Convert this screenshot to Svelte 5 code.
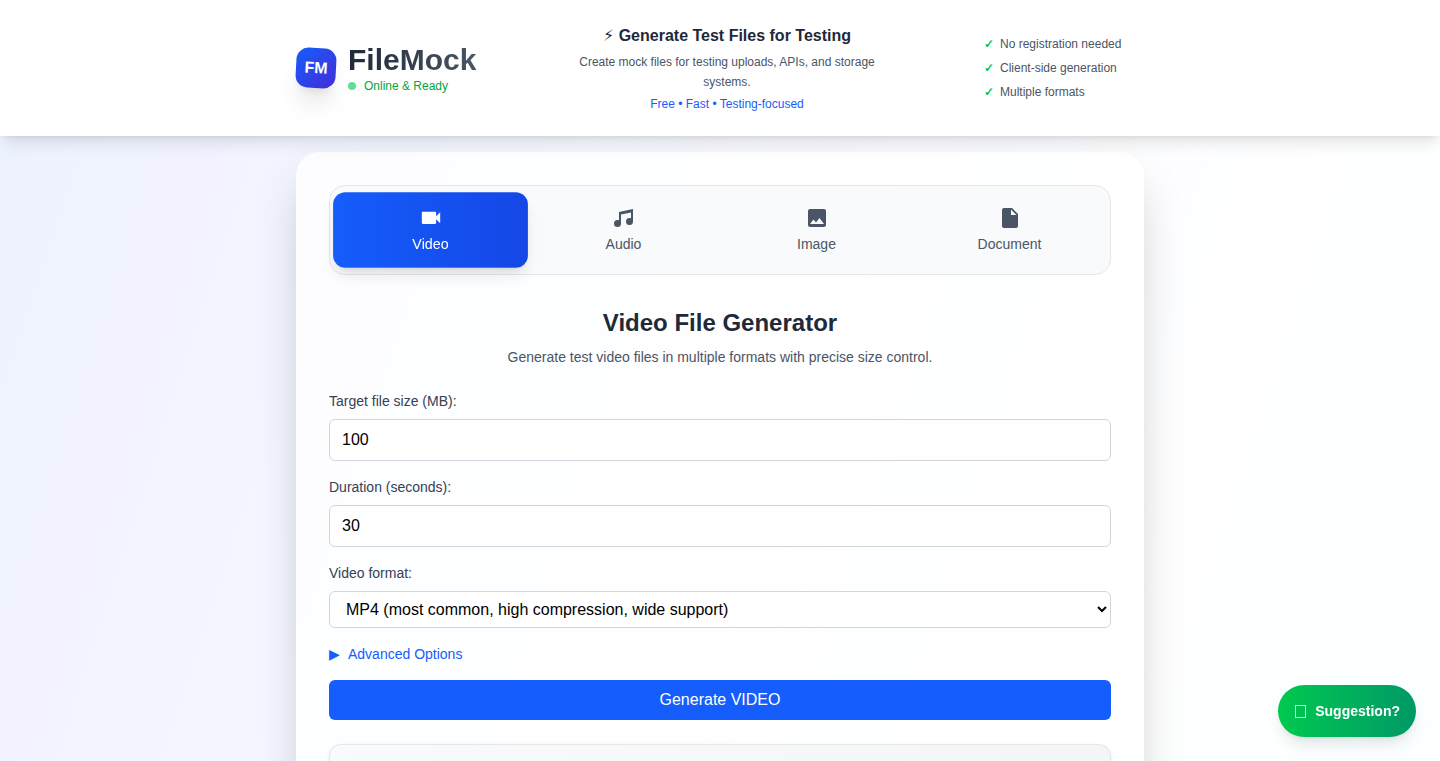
<script>
  const tabs = [
    { id: 'video', label: 'Video', path: 'M17 10.5V7c0-.55-.45-1-1-1H4c-.55 0-1 .45-1 1v10c0 .55.45 1 1 1h12c.55 0 1-.45 1-1v-3.5l4 4v-11l-4 4z' },
    { id: 'audio', label: 'Audio', path: 'M21 3v12.5a3.5 3.5 0 0 1-3.5 3.5a3.5 3.5 0 0 1-3.5-3.5a3.5 3.5 0 0 1 3.5-3.5c.54 0 1.05.12 1.5.34V6.47L9 8.6v8.9A3.5 3.5 0 0 1 5.5 21A3.5 3.5 0 0 1 2 17.5A3.5 3.5 0 0 1 5.5 14c.54 0 1.05.12 1.5.34V6l14-3z' },
    { id: 'image', label: 'Image', path: 'M21 19V5c0-1.1-.9-2-2-2H5c-1.1 0-2 .9-2 2v14c0 1.1.9 2 2 2h14c1.1 0 2-.9 2-2zM8.5 13.5l2.5 3.01L14.5 12l4.5 6H5l3.5-4.5z' },
    { id: 'document', label: 'Document', path: 'M6 2c-1.1 0-2 .9-2 2v16c0 1.1.9 2 2 2h12c1.1 0 2-.9 2-2V8l-6-6H6zm7 7V3.5L18.5 9H13z' }
  ];
  const features = ['No registration needed', 'Client-side generation', 'Multiple formats'];

  let active = $state('video');
  let size = $state(100);
  let duration = $state(30);
  let format = $state('mp4');
  const current = $derived(tabs.find((t) => t.id === active));
</script>

<div class="page">
  <header class="header">
    <div class="header-inner">
      <div class="brand">
        <div class="mark">FM</div>
        <div>
          <h1 class="name">FileMock</h1>
          <p class="status"><span class="dot"></span>Online &amp; Ready</p>
        </div>
      </div>
      <div class="pitch">
        <h2><span class="bolt">⚡&#xFE0E;</span> Generate Test Files for Testing</h2>
        <p>Create mock files for testing uploads, APIs, and storage systems.</p>
        <p class="tagline">Free • Fast • Testing-focused</p>
      </div>
      <ul class="features">
        {#each features as feature}
          <li><span class="check">✓</span>{feature}</li>
        {/each}
      </ul>
    </div>
  </header>

  <main class="content">
    <section class="card">
      <nav class="tabs">
        {#each tabs as tab}
          <button type="button" class="tab" class:active={active === tab.id} onclick={() => (active = tab.id)}>
            <svg viewBox="0 0 24 24" width="24" height="24" fill="currentColor" aria-hidden="true"><path d={tab.path} /></svg>
            <span>{tab.label}</span>
          </button>
        {/each}
      </nav>

      <h2 class="title">{current.label} File Generator</h2>
      <p class="lead">Generate test {active} files in multiple formats with precise size control.</p>

      <form class="form" onsubmit={(e) => e.preventDefault()}>
        <div class="field">
          <label for="size">Target file size (MB):</label>
          <input id="size" type="number" min="1" bind:value={size} />
        </div>
        <div class="field">
          <label for="duration">Duration (seconds):</label>
          <input id="duration" type="number" min="1" bind:value={duration} />
        </div>
        <div class="field">
          <label for="format">Video format:</label>
          <select id="format" bind:value={format}>
            <option value="mp4">MP4 (most common, high compression, wide support)</option>
          </select>
        </div>
        <button type="button" class="advanced"><span>▶</span><span>Advanced Options</span></button>
        <button type="submit" class="generate">Generate {active.toUpperCase()}</button>
      </form>

      <div class="panel"></div>
    </section>
  </main>

  <button type="button" class="suggestion"><span class="glyph" aria-hidden="true"></span><span>Suggestion?</span></button>
</div>

<style>
  :global(body) {
    font-family: "Liberation Sans", Arial, sans-serif;
    line-height: 24px;
  }
  .page, .page * { box-sizing: border-box; }
  .page {
    height: 100vh;
    display: flex;
    flex-direction: column;
    overflow: hidden;
    color: #1e2939;
    background: linear-gradient(108deg, #edf2ff 0%, #f0f3ff 12%, #f5f8ff 35%, #ffffff 82%, #fbffff 100%);
  }
  h1, h2, p, ul { margin: 0; padding: 0; }
  button { font-family: inherit; border: 0; cursor: pointer; }

  .header {
    position: relative;
    z-index: 2;
    background: #fff;
    padding: 24px;
    box-shadow: 0 10px 15px -3px rgba(0, 0, 0, 0.1), 0 4px 6px -4px rgba(0, 0, 0, 0.1);
  }
  .header-inner {
    max-width: 848px;
    margin: 0 auto;
    display: flex;
    align-items: center;
    justify-content: space-between;
  }
  .brand { display: flex; align-items: center; gap: 12px; width: 174px; }
  .mark {
    flex: none;
    width: 40px;
    height: 40px;
    display: flex;
    align-items: center;
    justify-content: center;
    border-radius: 12px;
    background: linear-gradient(135deg, #155dfc, #432dd7);
    color: #fff;
    font-size: 16px;
    font-weight: 700;
    transform: rotate(3deg);
    box-shadow: 0 20px 25px -5px rgba(0, 0, 0, 0.1), 0 8px 10px -6px rgba(0, 0, 0, 0.1);
  }
  .name {
    font-size: 30px;
    line-height: 36px;
    font-weight: 700;
    color: transparent;
    background: linear-gradient(90deg, #1e2939, #4a5565);
    background-clip: text;
    -webkit-background-clip: text;
  }
  .status {
    display: flex;
    align-items: center;
    gap: 8px;
    font-size: 12px;
    line-height: 16px;
    color: #00a63e;
  }
  .dot { width: 8px; height: 8px; border-radius: 50%; background: #63dd94; }
  .pitch { width: 320px; text-align: center; }
  .pitch h2 { font-size: 16px; line-height: 24px; font-weight: 700; margin-bottom: 4px; }
  .bolt { font-family: "DejaVu Sans", sans-serif; line-height: 16px; }
  .pitch p { font-size: 12px; line-height: 20px; color: #4a5565; }
  .pitch .tagline { color: #155dfc; margin-top: 4px; line-height: 16px; }
  .features {
    list-style: none;
    width: 160px;
    display: grid;
    gap: 8px;
    font-size: 12px;
    line-height: 16px;
    color: #4a5565;
  }
  .features li { display: flex; gap: 6px; }
  .check { color: #00c950; font-weight: 700; }

  .content {
    flex: 1;
    min-height: 0;
    overflow-y: auto;
    scrollbar-width: none;
    padding: 16px 24px;
  }
  .card {
    max-width: 848px;
    margin: 0 auto;
    padding: 32px;
    border: 1px solid rgba(255, 255, 255, 0.4);
    border-radius: 24px;
    background: rgba(255, 255, 255, 0.8);
    box-shadow: 0 25px 50px -12px rgba(0, 0, 0, 0.25);
  }
  .tabs {
    display: grid;
    grid-template-columns: repeat(4, 1fr);
    gap: 2px;
    padding: 7px 5px;
    border: 1px solid #e5e7eb;
    border-radius: 16px;
    background: #f9fafc;
  }
  .tab {
    height: 74px;
    display: flex;
    flex-direction: column;
    align-items: center;
    justify-content: center;
    gap: 4px;
    border-radius: 12px;
    background: transparent;
    color: #4a5565;
    font-size: 14px;
    line-height: 20px;
  }
  .tab.active {
    color: #fff;
    background: linear-gradient(90deg, #155dfc, #1447e6);
    box-shadow: 0 10px 15px -3px rgba(0, 0, 0, 0.1), 0 4px 6px -4px rgba(0, 0, 0, 0.1);
    transform: scale(1.02);
  }
  .title { margin-top: 32px; text-align: center; font-size: 24px; line-height: 32px; }
  .lead { margin-top: 8px; text-align: center; font-size: 14px; line-height: 20px; color: #4a5565; }
  .form { margin-top: 24px; display: flex; flex-direction: column; gap: 16px; }
  .field { display: flex; flex-direction: column; gap: 8px; }
  label { font-size: 14px; line-height: 20px; color: #364153; }
  input, select {
    width: 100%;
    border: 1px solid #d1d5dc;
    border-radius: 6px;
    background: #fff;
    color: #000;
    font-family: inherit;
    font-size: 16px;
  }
  input { height: 42px; padding: 8px 12px; appearance: textfield; -moz-appearance: textfield; }
  input::-webkit-inner-spin-button { appearance: none; margin: 0; }
  select { height: 37px; padding: 8px 12px; }
  .advanced {
    align-self: flex-start;
    display: flex;
    gap: 8px;
    padding: 0;
    background: none;
    color: #155dfc;
    font-size: 14px;
    line-height: 20px;
  }
  .generate {
    height: 40px;
    border-radius: 6px;
    background: #155dfc;
    color: #fff;
    font-size: 16px;
    line-height: 24px;
  }
  .panel {
    margin-top: 24px;
    min-height: 160px;
    border: 1px solid #e5e7eb;
    border-radius: 12px;
    background: linear-gradient(135deg, #f9fafb, #f3f4f6);
    box-shadow: 0 1px 3px rgba(0, 0, 0, 0.1);
  }
  .suggestion {
    position: fixed;
    right: 24px;
    bottom: 24px;
    z-index: 3;
    height: 52px;
    display: flex;
    align-items: center;
    gap: 8px;
    padding: 0 16px;
    border-radius: 26px;
    background: linear-gradient(90deg, #00c950, #009966);
    color: #fff;
    font-size: 14px;
    font-weight: 700;
    box-shadow: 0 10px 15px -3px rgba(0, 0, 0, 0.1), 0 4px 6px -4px rgba(0, 0, 0, 0.1);
  }
  .glyph {
    width: 11px;
    height: 13px;
    margin: 0 1px;
    border: 1px solid rgba(255, 255, 255, 0.75);
  }
</style>
